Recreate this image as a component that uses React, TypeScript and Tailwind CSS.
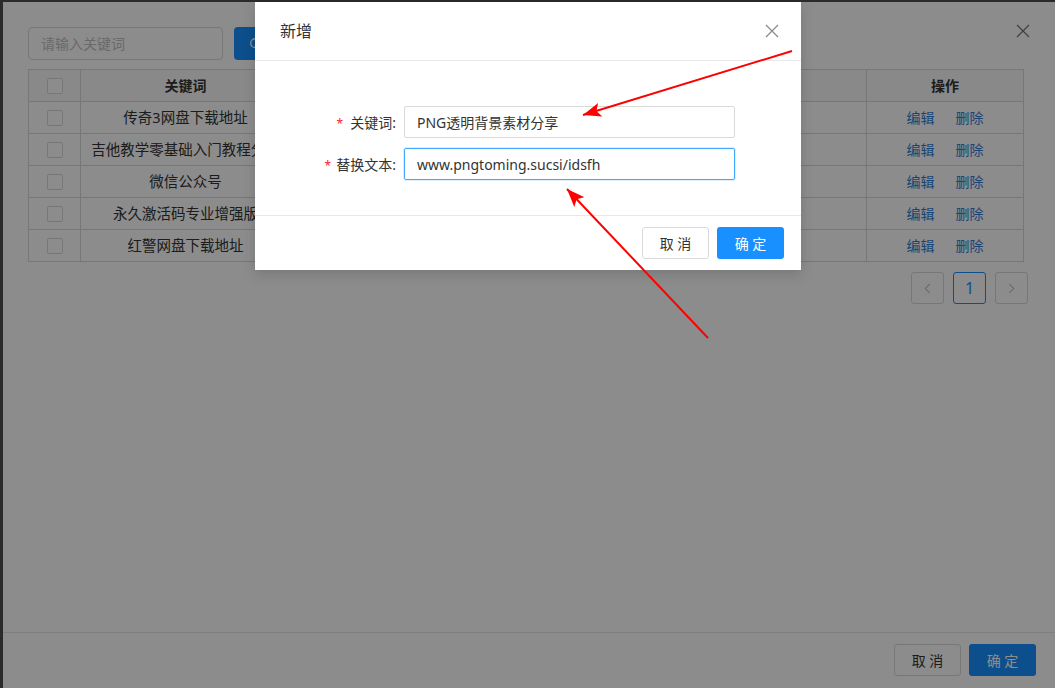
import React from "react";

const rows = [
  { k: "传奇3网盘下载地址", v: "pan.baidu.com/s/1chuanqi3" },
  { k: "吉他教学零基础入门教程分享", v: "www.jitajiaoxue.com/share" },
  { k: "微信公众号", v: "weixin.qq.com/r/abc" },
  { k: "永久激活码专业增强版", v: "www.jihuoma.net/pro" },
  { k: "红警网盘下载地址", v: "pan.baidu.com/s/1hongjing" },
];

function Checkbox() {
  return <span className="block h-4 w-4 rounded-[2px] border border-[#d9d9d9] bg-white" />;
}

function XIcon({ className }: { className?: string }) {
  return (
    <svg viewBox="0 0 14 14" className={className} fill="none" stroke="currentColor" strokeWidth="1.3">
      <path d="M1 1 L13 13 M13 1 L1 13" />
    </svg>
  );
}

export default function App() {
  return (
    <div className="relative h-[688px] w-[1055px] overflow-hidden bg-[#2b2b2b] pl-[3px] pt-[2px] font-['Noto_Sans','Noto_Sans_CJK_SC',sans-serif] text-[14px] text-[#333]">
      {/* underlying page */}
      <div className="relative flex h-[686px] w-[1052px] flex-col bg-white">
        <button className="absolute right-[25px] top-[22px] h-[14px] w-[14px] text-[#777]">
          <XIcon className="h-[14px] w-[14px]" />
        </button>

        <div className="flex-1 pl-[25px] pt-[25px]">
          <div className="flex h-[33px] gap-[11px]">
            <div className="flex w-[195px] items-center rounded-[4px] border border-[#d9d9d9] px-[12px] text-[#bfbfbf]">
              请输入关键词
            </div>
            <button className="flex w-[80px] items-center gap-[6px] rounded-[4px] bg-[#1890ff] pl-[15px] text-white">
              <svg viewBox="0 0 16 16" className="h-[14px] w-[14px]" fill="none" stroke="currentColor" strokeWidth="1.6">
                <circle cx="7" cy="7" r="5" />
                <path d="M11 11 L15 15" />
              </svg>
              搜索
            </button>
          </div>

          <div className="mt-[9px] grid w-[996px] grid-cols-[52px_210px_576px_157px] border-l border-t border-[#d9d9d9]">
            <div className="flex h-[32px] items-center justify-center border-b border-r border-[#d9d9d9] bg-[#fafafa]">
              <Checkbox />
            </div>
            <div className="flex h-[32px] items-center justify-center border-b border-r border-[#d9d9d9] bg-[#fafafa] font-semibold">
              关键词
            </div>
            <div className="flex h-[32px] items-center justify-center border-b border-r border-[#d9d9d9] bg-[#fafafa] font-semibold">
              替换文本
            </div>
            <div className="flex h-[32px] items-center justify-center border-b border-r border-[#d9d9d9] bg-[#fafafa] font-semibold">
              操作
            </div>
            {rows.map((r) => (
              <React.Fragment key={r.k}>
                <div className="flex h-[32px] items-center justify-center border-b border-r border-[#d9d9d9]">
                  <Checkbox />
                </div>
                <div className="flex h-[32px] items-center justify-center whitespace-nowrap border-b border-r border-[#d9d9d9] text-[14.5px]">
                  {r.k}
                </div>
                <div className="flex h-[32px] items-center justify-center border-b border-r border-[#d9d9d9]">
                  {r.v}
                </div>
                <div className="flex h-[32px] items-center justify-center gap-[21px] border-b border-r border-[#d9d9d9] text-[#2f7fd6]">
                  <span>编辑</span>
                  <span>删除</span>
                </div>
              </React.Fragment>
            ))}
          </div>

          <div className="mt-[10px] flex w-[1000px] justify-end gap-[9px]">
            <div className="flex h-[32px] w-[33px] items-center justify-center rounded-[3px] border border-[#d9d9d9] text-[#bbb]">
              <svg viewBox="0 0 8 12" className="h-[11px] w-[7px]" fill="none" stroke="currentColor" strokeWidth="1.2">
                <path d="M6.5 1 L1.5 6 L6.5 11" />
              </svg>
            </div>
            <div className="flex h-[32px] w-[33px] items-center justify-center rounded-[3px] border border-[#1890ff] text-[16px] text-[#1890ff]">
              1
            </div>
            <div className="flex h-[32px] w-[33px] items-center justify-center rounded-[3px] border border-[#d9d9d9] text-[#bbb]">
              <svg viewBox="0 0 8 12" className="h-[11px] w-[7px]" fill="none" stroke="currentColor" strokeWidth="1.2">
                <path d="M1.5 1 L6.5 6 L1.5 11" />
              </svg>
            </div>
          </div>
        </div>

        <div className="flex h-[56px] justify-end gap-[8px] border-t border-[#e8e8e8] pr-[19px] pt-[11px]">
          <button className="h-[32px] w-[67px] rounded-[3px] border border-[#d9d9d9] bg-white text-[#333]">取 消</button>
          <button className="h-[32px] w-[67px] rounded-[3px] bg-[#1890ff] text-white">确 定</button>
        </div>

        {/* mask */}
        <div className="absolute inset-0 bg-black/45" />
      </div>

      {/* modal */}
      <div className="absolute left-[255px] top-[2px] flex h-[268px] w-[546px] flex-col bg-white shadow-[0_4px_12px_rgba(0,0,0,0.15)]">
        <div className="flex h-[59px] items-center justify-between border-b border-[#e8e8e8] pl-[25px] pr-[22px]">
          <span className="text-[16px] text-[#333]">新增</span>
          <XIcon className="h-[14px] w-[14px] text-[#8c8c8c]" />
        </div>
        <div className="flex h-[154px] flex-col gap-[10px] pt-[45px]">
          <div className="flex items-center">
            <div className="w-[149px] pr-[8px] text-right text-[#333]">
              <span className="mr-[7px] text-[12px] text-[#f5222d]">*</span>关键词:
            </div>
            <div className="flex h-[32px] w-[331px] items-center rounded-[2px] border border-[#d9d9d9] px-[12px] text-[#333]">
              PNG透明背景素材分享
            </div>
          </div>
          <div className="flex items-center">
            <div className="w-[149px] pr-[8px] text-right text-[#333]">
              <span className="mr-[5px] text-[12px] text-[#f5222d]">*</span>替换文本:
            </div>
            <div className="flex h-[32px] w-[331px] items-center rounded-[2px] border border-[#40a9ff] px-[12px] text-[#333] shadow-[0_0_0_1px_rgba(24,144,255,0.15)]">
              www.pngtoming.sucsi/idsfh
            </div>
          </div>
        </div>
        <div className="flex flex-1 justify-end gap-[8px] border-t border-[#e8e8e8] pr-[17px] pt-[11px]">
          <button className="h-[32px] w-[67px] rounded-[3px] border border-[#d9d9d9] bg-white text-[#333]">取 消</button>
          <button className="h-[32px] w-[67px] rounded-[3px] bg-[#1890ff] text-white">确 定</button>
        </div>
      </div>

      {/* annotation arrows */}
      <svg className="pointer-events-none absolute inset-0" width="1055" height="688">
        <defs>
          <marker id="ah" markerUnits="userSpaceOnUse" markerWidth="20" markerHeight="14" refX="18" refY="7" orient="auto">
            <path d="M0 0 L18 7 L0 14 L4 7 Z" fill="#ff0000" />
          </marker>
        </defs>
        <line x1="792" y1="51" x2="583" y2="115" stroke="#ff0000" strokeWidth="2" markerEnd="url(#ah)" />
        <line x1="708" y1="338" x2="567" y2="189" stroke="#ff0000" strokeWidth="2" markerEnd="url(#ah)" />
      </svg>
    </div>
  );
}
